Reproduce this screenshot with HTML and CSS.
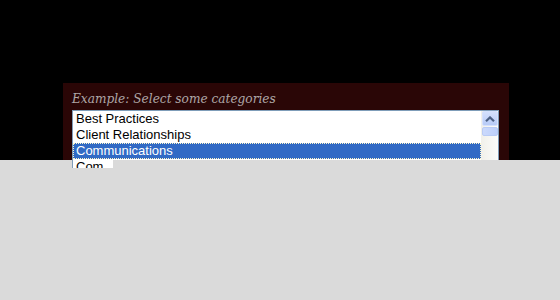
FILE: index.html
```html
<!DOCTYPE html>
<html lang="en">
<head>
<meta charset="utf-8">
<title>Categories</title>
<link rel="stylesheet" href="styles.css">
</head>
<body>
<div class="page">
  <div class="panel">
    <div class="label">Example: Select some categories</div>
    <div class="listbox">
      <ul class="options">
        <li class="option">Best Practices</li>
        <li class="option">Client Relationships</li>
        <li class="option selected">Communications</li>
        <li class="option">Com<span class="ghost"></span></li>
        <li class="option">Compensation</li>
      </ul>
      <div class="scrollbar">
        <div class="sb-btn">
          <svg width="10" height="6" viewBox="0 0 10 6"><path d="M1 5.2 L5 1.4 L9 5.2" fill="none" stroke="#4d6185" stroke-width="2.2"/></svg>
        </div>
        <div class="sb-thumb"></div>
      </div>
    </div>
  </div>
</div>
<div class="cover"></div>
</body>
</html>
```

FILE: styles.css
```css
html, body {
  margin: 0;
  padding: 0;
  background: #000;
  width: 560px;
  height: 300px;
  overflow: hidden;
}
.page {
  padding: 83px 0 0 63px;
}
.panel {
  width: 427px;
  height: 200px;
  background: #2a0606;
  padding: 4px 10px 0 9px;
}
.label {
  height: 23px;
  line-height: 23px;
  font-family: "DejaVu Serif Condensed", "DejaVu Serif", serif;
  font-stretch: condensed;
  font-style: italic;
  font-size: 13.5px;
  color: #aea6a6;
  white-space: nowrap;
}
.listbox {
  display: flex;
  border: 1px solid #7f9db9;
  background: #fff;
  height: 120px;
}
.options {
  list-style: none;
  margin: 0;
  padding: 0;
  flex: 1;
}
.option {
  height: 16px;
  line-height: 16px;
  padding-left: 3px;
  font-family: "Liberation Sans", Arial, sans-serif;
  font-size: 13px;
  color: #000;
  white-space: nowrap;
  box-sizing: border-box;
}
.option.selected {
  background: #316ac5;
  color: #fff;
  outline: 1px dotted #fdf6c9;
  outline-offset: -1px;
}
.ghost {
  display: inline-block;
  width: 6px;
  height: 4px;
  margin-left: 4px;
  background: linear-gradient(90deg, #bdbdbd, #d6d6d6);
  vertical-align: -1px;
}
.scrollbar {
  width: 17px;
  background: linear-gradient(90deg, #f1f0ea, #fcfcfa);
  display: flex;
  flex-direction: column;
  align-items: center;
}
.sb-btn {
  width: 14px;
  height: 13px;
  border: 1px solid #d5e1fd;
  border-radius: 2px;
  background: linear-gradient(180deg, #d4e0fc, #b7cbf7);
  display: flex;
  align-items: center;
  justify-content: center;
}
.sb-thumb {
  width: 14px;
  height: 7px;
  margin-top: 1px;
  border: 1px solid #b9cbf5;
  border-radius: 2px;
  background: linear-gradient(90deg, #cbd9fc, #bccffa);
}
.cover {
  position: absolute;
  left: 0;
  top: 160px;
  width: 560px;
  height: 140px;
  background: #dadada;
  clip-path: polygon(0 0, 72px 0, 72px 8px, 113px 8px, 113px 0, 100% 0, 100% 100%, 0 100%);
}
```
